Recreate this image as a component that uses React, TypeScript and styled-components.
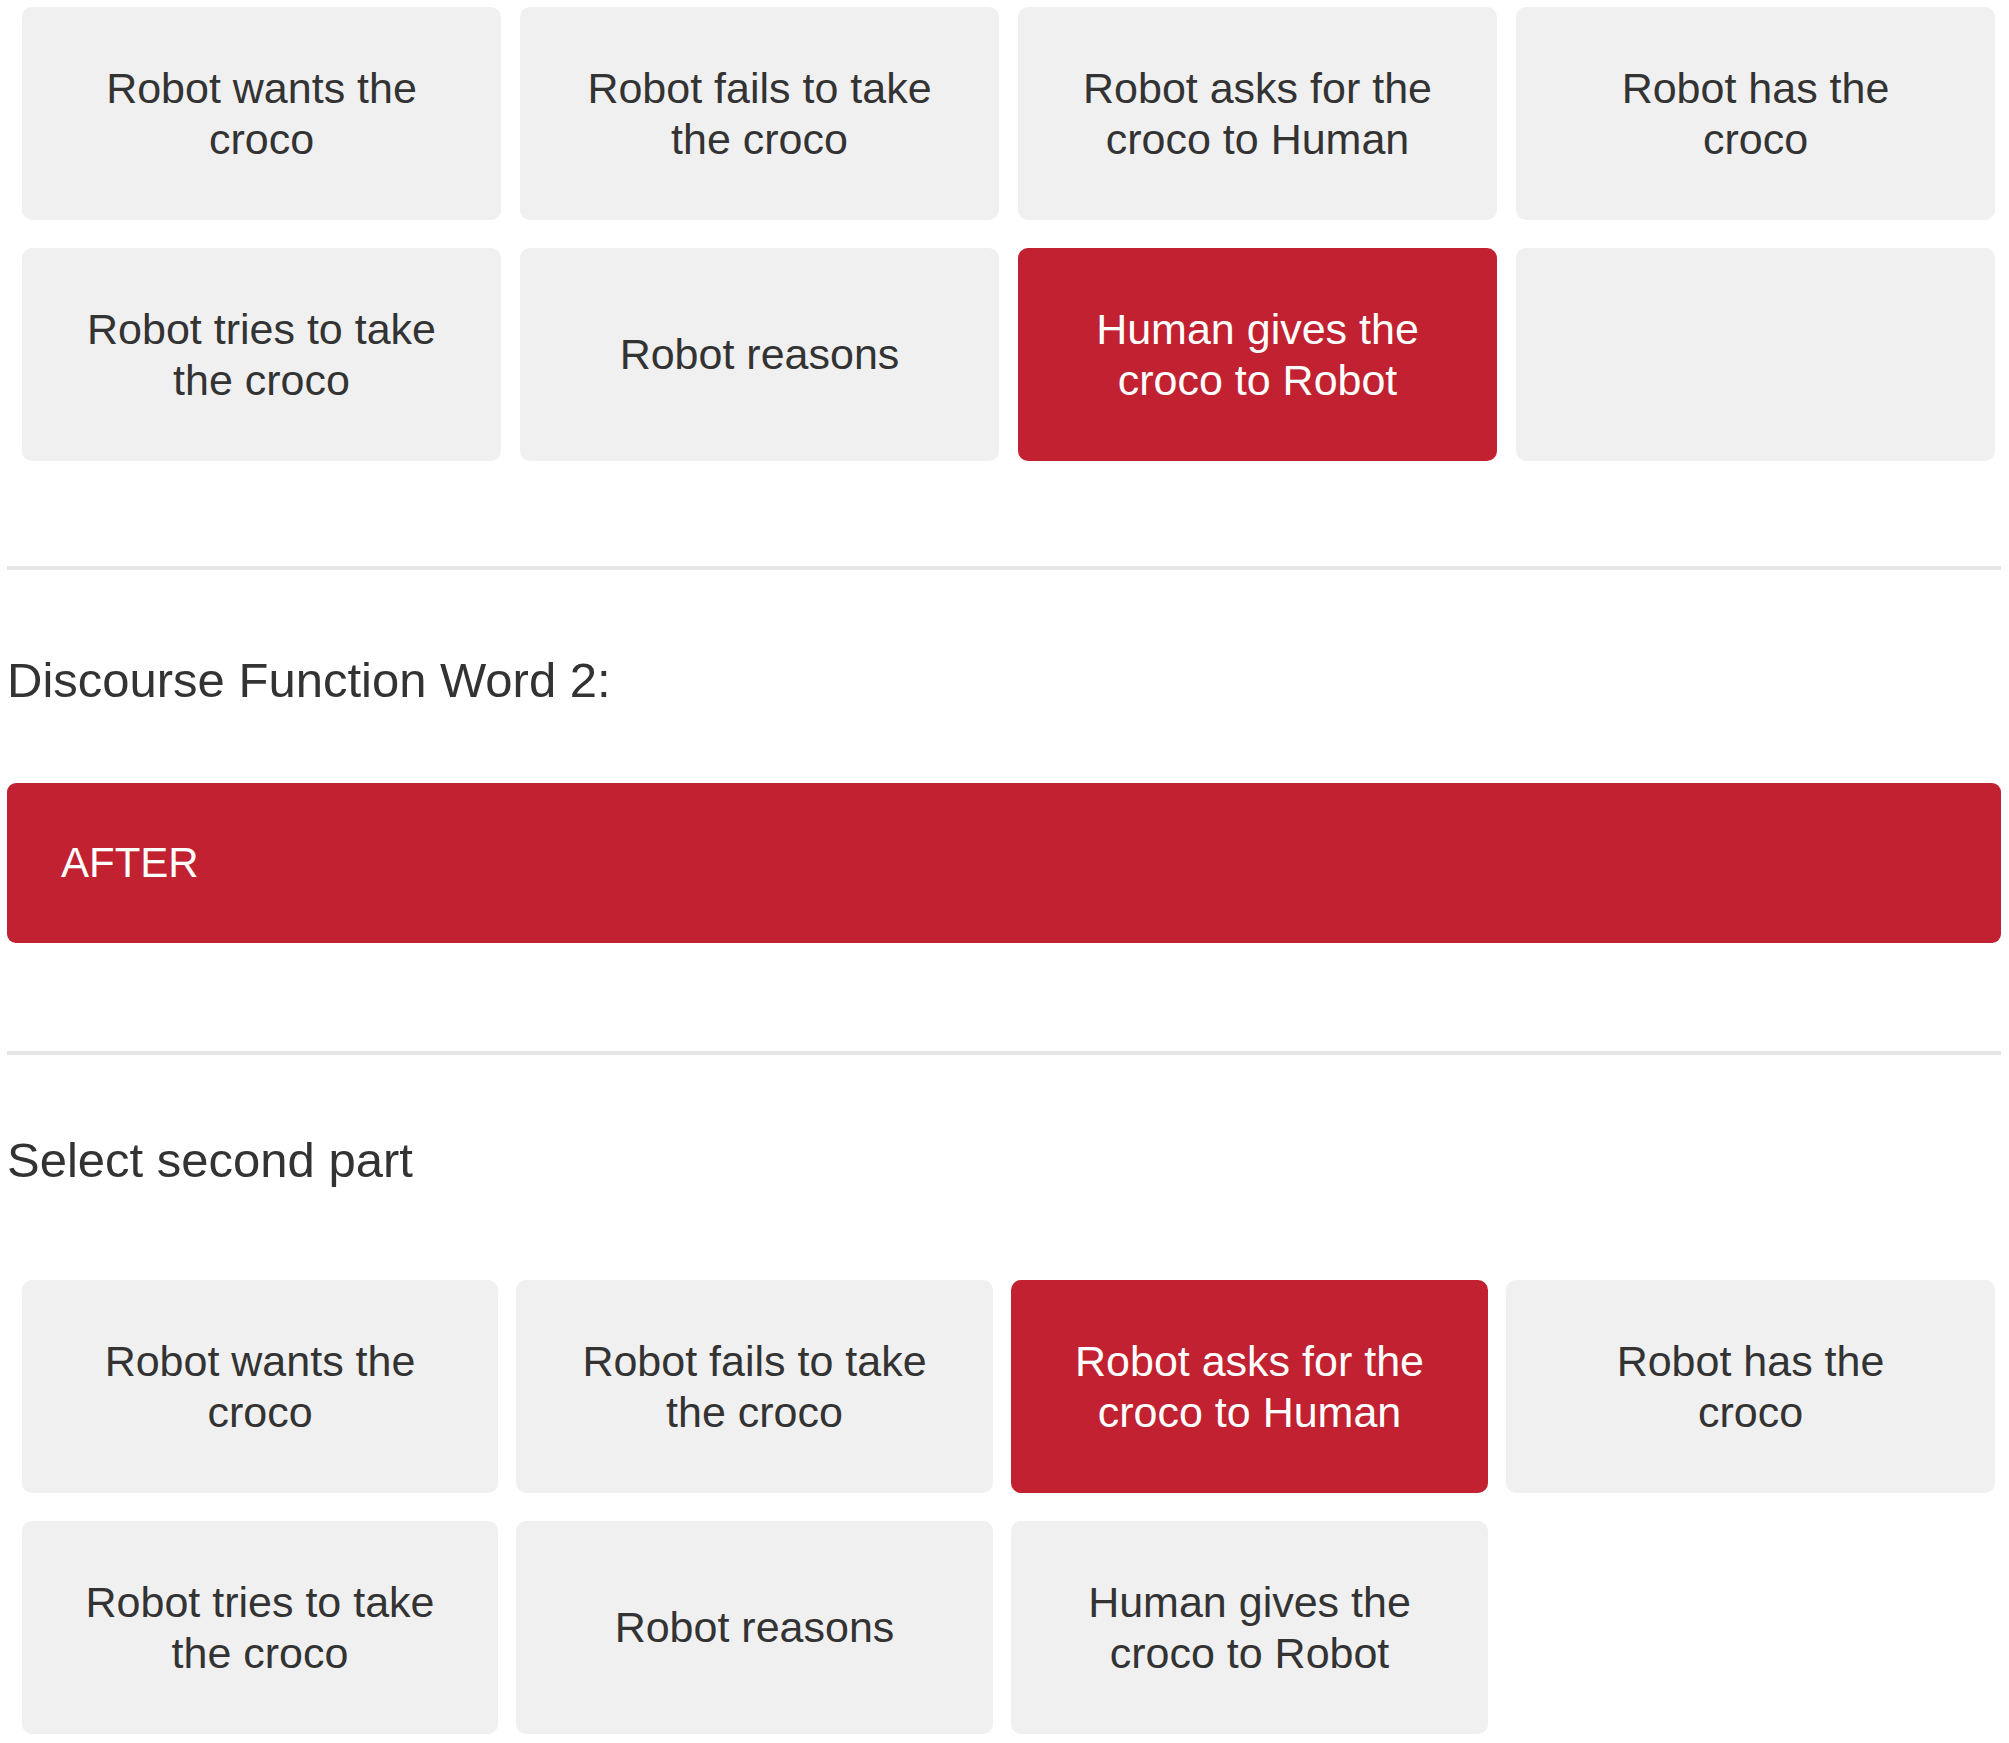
import styled, { createGlobalStyle } from "styled-components";

const GlobalStyle = createGlobalStyle`
  html, body {
    margin: 0;
    padding: 0;
    background: #ffffff;
  }
  body {
    font-family: "Liberation Sans", Arial, sans-serif;
    color: #333333;
  }
`;

const RED = "#c12130";

const Page = styled.div`
  padding: 7px 8px 0 7px;
  display: flex;
  flex-direction: column;
`;

const ChoiceGrid = styled.div<{ $top?: number; $cols?: string; $gap?: number }>`
  display: grid;
  grid-template-columns: ${({ $cols = "repeat(4, 1fr)" }) => $cols};
  grid-auto-rows: 213px;
  column-gap: ${({ $gap = 19 }) => $gap}px;
  row-gap: 28px;
  margin: ${({ $top = 0 }) => `${$top}px 6px 0 15px`};
`;

const Card = styled.div<{ $active?: boolean }>`
  display: flex;
  align-items: center;
  justify-content: center;
  padding: 0 58px;
  text-align: center;
  font-size: 43px;
  line-height: 51px;
  border-radius: 10px;
  background: ${({ $active }) => ($active ? RED : "#f0f0f0")};
  color: ${({ $active }) => ($active ? "#ffffff" : "#333333")};
`;

const Divider = styled.hr<{ $top: number }>`
  margin: ${({ $top }) => `${$top}px 0 0 0`};
  border: 0;
  height: 4px;
  background: #e6e6e6;
`;

const Heading = styled.h4<{ $top: number }>`
  margin: ${({ $top }) => `${$top}px 0 0 0`};
  font-size: 49px;
  font-weight: normal;
  line-height: 56px;
  color: #333333;
`;

const WordBar = styled.div`
  margin-top: 75px;
  height: 160px;
  display: flex;
  align-items: center;
  padding-left: 54px;
  border-radius: 9px;
  background: ${RED};
  color: #ffffff;
  font-size: 42px;
`;

const sentences = [
  "Robot wants the croco",
  "Robot fails to take the croco",
  "Robot asks for the croco to Human",
  "Robot has the croco",
  "Robot tries to take the croco",
  "Robot reasons",
  "Human gives the croco to Robot",
];

export default function App() {
  return (
    <>
      <GlobalStyle />
      <Page>
        <ChoiceGrid>
          {sentences.map((s, i) => (
            <Card key={s} $active={i === 6}>
              {s}
            </Card>
          ))}
          <Card />
        </ChoiceGrid>

        <Divider $top={105} />
        <Heading $top={82}>Discourse Function Word 2:</Heading>
        <WordBar>AFTER</WordBar>
        <Divider $top={108} />
        <Heading $top={77}>Select second part</Heading>

        <ChoiceGrid $top={92} $cols="476px 477px 477px 1fr" $gap={18}>
          {sentences.map((s, i) => (
            <Card key={s} $active={i === 2}>
              {s}
            </Card>
          ))}
        </ChoiceGrid>
      </Page>
    </>
  );
}
